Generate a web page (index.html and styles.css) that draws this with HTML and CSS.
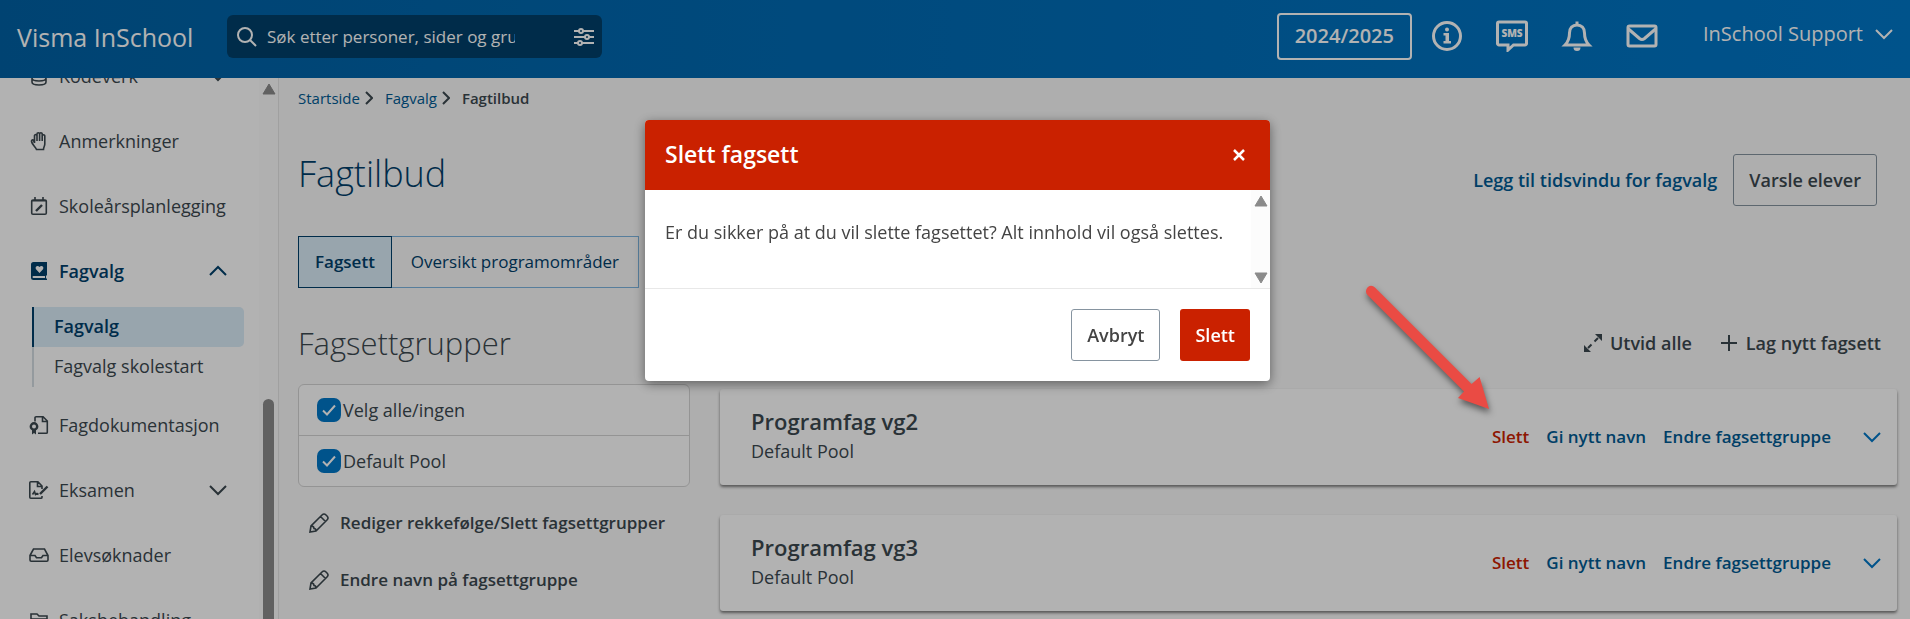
FILE: index.html
```html
<!DOCTYPE html>
<html lang="no">
<head>
<meta charset="utf-8">
<title>Visma InSchool</title>
<link rel="stylesheet" href="styles.css">
</head>
<body>
<header class="topbar">
  <a class="brand" href="#">Visma InSchool</a>
  <div class="search">
    <svg class="search-icon" viewBox="0 0 20 20"><circle cx="8" cy="8" r="7"/><path d="M13 13l6 6"/></svg>
    <input class="search-input" type="text" aria-label="Søk" placeholder="Søk etter personer, sider og grupper">
    <button class="icon-button" aria-label="Filter"><svg class="filter-icon" viewBox="0 0 20 20"><path d="M0 4h5M9 4h11M0 10h11M15 10h5M0 16h4M8 16h12"/><circle cx="7" cy="4" r="2"/><circle cx="13" cy="10" r="2"/><circle cx="6" cy="16" r="2"/></svg></button>
  </div>
  <nav class="tools" aria-label="Verktøy">
    <button class="year">2024/2025</button>
    <button class="icon-button" aria-label="Informasjon"><svg class="tool-icon" viewBox="0 0 32 32"><circle cx="16" cy="16" r="13.500"/><path class="fill" d="M12.500 13h5.500v8h2v2.500h-7.500V21h2v-5.500h-2z"/><circle class="fill" cx="16" cy="9.500" r="2"/></svg></button>
    <button class="icon-button" aria-label="SMS"><svg class="tool-icon" viewBox="0 0 32 32"><path d="M3 2h26a1.500 1.500 0 0 1 1.500 1.500v20a1.500 1.500 0 0 1-1.500 1.500H17.500L12 30v-5H3a1.500 1.500 0 0 1-1.500-1.500v-20A1.500 1.500 0 0 1 3 2z"/><text class="sms" x="16" y="17" text-anchor="middle">SMS</text></svg></button>
    <button class="icon-button" aria-label="Varsler"><svg class="tool-icon" viewBox="0 0 32 32"><path d="M4 25c3-3 4.500-6 4.500-12 0-5 3-8 7.500-8s7.500 3 7.500 8c0 6 1.500 9 4.500 12z"/><path d="M16 1.500V5"/><path class="fill" d="M12.500 27.500h7a3.500 3.500 0 0 1-7 0z"/></svg></button>
    <button class="icon-button" aria-label="Meldinger"><svg class="tool-icon" viewBox="0 0 32 32"><rect x="2" y="6" width="28" height="20" rx="1.500"/><path d="M2.500 9l11 9.500q2.500 2 5 0l11-9.500"/></svg></button>
    <button class="account">InSchool Support<svg class="chevron" viewBox="0 0 18 12"><path d="M1 2l8 8 8-8"/></svg></button>
  </nav>
</header>

<div class="shell">
  <aside class="sidebar">
    <nav class="menu">
      <a class="menu-item" href="#"><svg class="menu-icon" viewBox="0 0 20 20"><ellipse cx="10" cy="4" rx="7" ry="3"/><path d="M3 4v12c0 4 14 4 14 0V4M3 8c0 4 14 4 14 0M3 12c0 4 14 4 14 0"/></svg><span>Kodeverk</span><svg class="chevron" viewBox="0 0 18 12"><path d="M1 2l8 8 8-8"/></svg></a>
      <a class="menu-item" href="#"><svg class="menu-icon" viewBox="0 0 20 20"><path d="M5.500 12V4.500a1.300 1.300 0 0 1 2.500 0V10 3a1.300 1.300 0 0 1 2.600 0v7V3a1.300 1.300 0 0 1 2.600 0v7V5a1.300 1.300 0 0 1 2.600 0v8c0 2-1.300 3-1.300 5.500H7.500C6.500 16 3 13.500 2.500 10.500 2.300 8.800 4 8.500 4.500 9.500L5.500 12"/></svg><span>Anmerkninger</span></a>
      <a class="menu-item" href="#"><svg class="menu-icon" viewBox="0 0 20 20"><rect x="2.700" y="4" width="14.600" height="14.300" rx="1.300"/><path d="M2.700 4.800h14.600M6 1v3M14 1v3"/><path class="thick" d="M7 15l6-6"/></svg><span>Skoleårsplanlegging</span></a>
      <a class="menu-item menu-item-open" href="#"><svg class="menu-icon" viewBox="0 0 20 20"><path class="fill" d="M4.500 1H18v13.500h-1v3h1V19H4.500A2.500 2.500 0 0 1 2 16.500v-13A2.500 2.500 0 0 1 4.500 1z"/><path class="cut" d="M4.500 15H16v2H4.500a1 1 0 0 1 0-2zM10.500 12L7 8.200C5.500 6 8.500 3.500 10.500 6c2-2.500 5 0 3.500 2.200z"/></svg><span>Fagvalg</span><svg class="chevron" viewBox="0 0 18 12"><path d="M1 10l8-8 8 8"/></svg></a>
      <div class="submenu">
        <a class="submenu-item submenu-item-active" href="#">Fagvalg</a>
        <a class="submenu-item" href="#">Fagvalg skolestart</a>
      </div>
      <a class="menu-item" href="#"><svg class="menu-icon" viewBox="0 0 20 20"><path d="M6 6.500V2.800A1.100 1.100 0 0 1 7.100 1.700h7L18.300 6v11.200a1.100 1.100 0 0 1-1.100 1.100H9M13.500 2v4.500H18"/><circle class="thick" cx="5" cy="11.500" r="3.200"/><path class="fill" d="M3 15h4v4.500L5 18l-2 1.500z"/></svg><span>Fagdokumentasjon</span></a>
      <a class="menu-item" href="#"><svg class="menu-icon" viewBox="0 0 20 20"><path d="M13 16v1.200a1.100 1.100 0 0 1-1.100 1.100H1.800A1.100 1.100 0 0 1 .8 17.200V2.800a1.100 1.100 0 0 1 1.100-1.100h7L13 6v3M8.500 2v4.500H13M3.500 14.500l2-3 1 3 1.500-1 1.500 1"/><path class="thick" d="M11 14l7.500-7.500"/></svg><span>Eksamen</span><svg class="chevron" viewBox="0 0 18 12"><path d="M1 2l8 8 8-8"/></svg></a>
      <a class="menu-item" href="#"><svg class="menu-icon" viewBox="0 0 20 20"><path d="M1 10.500L4.500 4h11l3.500 6.500v4.500a1.200 1.200 0 0 1-1.200 1.200H2.200A1.200 1.200 0 0 1 1 15zM1 10.500h5l1.500 2.300h5l1.500-2.300h5"/></svg><span>Elevsøknader</span></a>
      <a class="menu-item" href="#"><svg class="menu-icon" viewBox="0 0 20 20"><path d="M2 17V4h6l2 2h8v11zM2 9h16"/></svg><span>Saksbehandling</span></a>
    </nav>
    <div class="scrollbar"><svg class="scroll-arrow" viewBox="0 0 14 12"><path d="M7 1l6 10H1z"/></svg><div class="scroll-thumb"></div></div>
  </aside>

  <main class="content">
    <nav class="crumbs" aria-label="Brødsmuler">
      <a href="#">Startside</a><svg class="crumb-sep" viewBox="0 0 8 14"><path d="M1 1l6 6-6 6"/></svg>
      <a href="#">Fagvalg</a><svg class="crumb-sep" viewBox="0 0 8 14"><path d="M1 1l6 6-6 6"/></svg>
      <span class="crumb-current">Fagtilbud</span>
    </nav>
    <div class="page-head">
      <h1 class="page-title">Fagtilbud</h1>
      <a class="head-link" href="#">Legg til tidsvindu for fagvalg</a>
      <button class="button button-outline">Varsle elever</button>
    </div>
    <div class="tabs">
      <button class="tab tab-active">Fagsett</button><button class="tab">Oversikt programområder</button>
    </div>
    <div class="columns">
      <section class="groups">
        <h2 class="groups-title">Fagsettgrupper</h2>
        <div class="group-list">
          <label class="group-row"><input class="check" type="checkbox" checked>Velg alle/ingen</label>
          <label class="group-row"><input class="check" type="checkbox" checked>Default Pool</label>
        </div>
        <button class="edit"><svg class="edit-icon" viewBox="0 0 20 20"><path d="M1 19l1-6L13 2q2-2 4 0l1 1q2 2 0 4L7 18zM11.500 3.500l5 5M2 13q3 0 3 2.500 2 0 2 2.500"/></svg>Rediger rekkefølge/Slett fagsettgrupper</button>
        <button class="edit"><svg class="edit-icon" viewBox="0 0 20 20"><path d="M1 19l1-6L13 2q2-2 4 0l1 1q2 2 0 4L7 18zM11.500 3.500l5 5M2 13q3 0 3 2.500 2 0 2 2.500"/></svg>Endre navn på fagsettgruppe</button>
      </section>
      <section class="sets">
        <div class="set-actions">
          <button class="set-action"><svg class="action-icon" viewBox="0 0 18 18"><path d="M4 14l3.500-3.500M10.500 7.500L14 4"/><path class="fill" d="M0 18v-7l7 7zM18 0v7l-7-7z"/></svg>Utvid alle</button>
          <button class="set-action"><svg class="action-icon" viewBox="0 0 18 18"><path d="M9 1v16M1 9h16"/></svg>Lag nytt fagsett</button>
        </div>
        <article class="card">
          <div class="card-text"><h3 class="card-title">Programfag vg2</h3><p class="card-sub">Default Pool</p></div>
          <div class="card-links"><a class="danger" href="#">Slett</a><a href="#">Gi nytt navn</a><a href="#">Endre fagsettgruppe</a></div>
          <button class="icon-button" aria-label="Utvid"><svg class="chevron card-chevron" viewBox="0 0 18 12"><path d="M1 2l8 8 8-8"/></svg></button>
        </article>
        <article class="card">
          <div class="card-text"><h3 class="card-title">Programfag vg3</h3><p class="card-sub">Default Pool</p></div>
          <div class="card-links"><a class="danger" href="#">Slett</a><a href="#">Gi nytt navn</a><a href="#">Endre fagsettgruppe</a></div>
          <button class="icon-button" aria-label="Utvid"><svg class="chevron card-chevron" viewBox="0 0 18 12"><path d="M1 2l8 8 8-8"/></svg></button>
        </article>
      </section>
    </div>
  </main>
</div>

<div class="overlay">
  <div class="modal" role="dialog" aria-modal="true" aria-labelledby="modal-title">
    <div class="modal-head">
      <h2 class="modal-title" id="modal-title">Slett fagsett</h2>
      <button class="icon-button" aria-label="Lukk"><svg class="close-icon" viewBox="0 0 12 12"><path d="M1 1l10 10M11 1L1 11"/></svg></button>
    </div>
    <div class="modal-body">
      <p class="modal-text">Er du sikker på at du vil slette fagsettet? Alt innhold vil også slettes.</p>
      <div class="modal-scroll"><svg class="scroll-arrow" viewBox="0 0 14 12"><path d="M7 1l6 10H1z"/></svg><svg class="scroll-arrow" viewBox="0 0 14 12"><path d="M7 11L1 1h12z"/></svg></div>
    </div>
    <div class="modal-foot">
      <button class="button button-outline">Avbryt</button>
      <button class="button button-danger">Slett</button>
    </div>
  </div>
</div>
<svg class="pointer" viewBox="0 0 140 140"><path d="M16.200 12.800a5.500 5.500 0 0 1 3.500 1.500L116.600 111l8-7L134 136l-31-11 6-6.500L12.500 22a5.500 5.500 0 0 1 3.700-9.200z"/></svg>
</body>
</html>
```
FILE: styles.css
```css
* { box-sizing: border-box; }
body {
  margin: 0;
  height: 100vh;
  display: flex;
  flex-direction: column;
  overflow: hidden;
  background: #f9f9f9;
  color: #3c484f;
  font: 18px/26px "Open Sans", "Noto Sans", sans-serif;
}
a { text-decoration: none; color: #005b94; }
button { font: inherit; color: inherit; background: none; border: 0; padding: 0; cursor: pointer; }
h1, h2, h3, p { margin: 0; }
svg { fill: none; stroke: currentColor; stroke-width: 2; flex: none; display: block; }
.fill { fill: currentColor; stroke: none; }
.icon-button { display: flex; }

.topbar {
  flex: none;
  display: flex;
  align-items: center;
  height: 78px;
  padding: 0 17px;
  background: linear-gradient(90deg, #0061a4, #0077c8);
  color: #fff;
}
.brand { width: 210px; padding-bottom: 4px; color: #fff; font-size: 25px; line-height: 36px; }
.search {
  display: flex;
  align-items: center;
  width: 375px;
  height: 43px;
  margin-bottom: 5px;
  padding: 0 8px 0 10px;
  border-radius: 6px;
  background: #00406b;
}
.search-icon { width: 20px; height: 20px; margin-right: 10px; }
.search-input {
  width: 248px;
  padding: 0;
  border: 0;
  outline: 0;
  background: none;
  color: #fff;
  font: inherit;
  font-size: 17px;
  margin-right: auto;
}
.search-input::placeholder { color: #fff; opacity: 1; }
.filter-icon { width: 20px; height: 20px; }
.tools { display: flex; align-items: center; margin-left: auto; margin-bottom: 6px; }
.year {
  height: 47px;
  padding: 0 16px;
  margin-right: 19px;
  border: 2px solid #fff;
  border-radius: 4px;
  font-size: 20px;
  font-weight: 600;
}
.tool-icon { width: 32px; height: 32px; margin-right: 33px; stroke-width: 3; }
.sms { fill: currentColor; stroke: none; font-size: 10px; font-weight: 800; }
.account { display: flex; align-items: center; gap: 12px; margin-left: 12px; padding-bottom: 4px; font-size: 20px; }
.chevron { width: 18px; height: 12px; }

.shell { flex: 1; min-height: 0; display: flex; }
.sidebar {
  flex: none;
  display: flex;
  width: 279px;
  overflow: hidden;
  background: #fff;
  border-right: 1px solid #e6e6e6;
}
.menu { flex: 1; margin-top: -35px; }
.menu-item { display: flex; align-items: center; height: 65px; padding: 0 32px 0 29px; color: #3c484f; }
.menu-item span { flex: 1; }
.menu-icon { width: 20px; height: 20px; margin-right: 10px; stroke-width: 1.6; }
.menu-icon .thick { stroke-width: 2.4; }
.menu-item-open { color: #00406b; font-weight: 600; }
.cut { fill: #fff; stroke: none; }
.submenu { margin: 4px 15px 5px 32px; }
.submenu-item { display: block; height: 40px; padding-left: 20px; border-left: 2px solid #d5dde3; line-height: 38px; color: #3c484f; }
.submenu-item-active { border-color: #00406b; border-radius: 0 5px 5px 0; background: #daecf8; color: #00406b; font-weight: 600; }
.scrollbar { display: flex; flex-direction: column; align-items: center; width: 19px; padding-top: 5px; background: #fcfcfc; }
.scroll-arrow { width: 14px; height: 12px; fill: #8b8b8b; stroke: #8b8b8b; stroke-width: 1; stroke-linejoin: round; }
.scroll-thumb { flex: 1; width: 11px; margin-top: 304px; border-radius: 6px 6px 0 0; background: #8b8b8b; }

.content { flex: 1; min-width: 0; overflow: hidden; padding: 7px 13px 0 19px; }
.crumbs { display: flex; align-items: center; font-size: 15px; }
.crumb-sep { width: 8px; height: 14px; margin: 0 12px 0 5px; color: #3c484f; }
.crumb-current { font-weight: 600; }
.page-head { display: flex; align-items: center; margin: 43px 20px 0 0; }
.page-title { margin-right: auto; padding-bottom: 12px; font-size: 36px; line-height: 40px; font-weight: 300; color: #00406b; }
.head-link { margin-right: 16px; font-weight: 600; }
.button { height: 52px; padding: 0 15px; border-radius: 3px; font-weight: 600; }
.button-outline { border: 1px solid #8694a0; }
.button-danger { background: #ca2100; color: #fff; }
.tabs { display: flex; margin-top: 30px; }
.tab { height: 52px; padding: 0 19px; border: 1px solid #7db5e0; border-left: 0; color: #00406b; font-size: 17px; }
.tab-active { padding: 0 16px; border: 1px solid #00406b; background: #daecf8; font-weight: 600; }
.columns { display: flex; gap: 30px; margin-top: 36px; }
.groups { width: 392px; }
.groups-title { font-size: 31px; line-height: 38px; font-weight: 300; }
.group-list { margin: 22px 0 7px; border: 1px solid #d5d5d5; border-radius: 6px; background: #fff; }
.group-row { display: flex; align-items: center; height: 50px; padding-left: 18px; }
.group-row + .group-row { height: 51px; border-top: 1px solid #d5d5d5; }
.check {
  appearance: none;
  width: 24px;
  height: 24px;
  margin: 0 2px 0 0;
  border-radius: 7px;
  background: #0077c8 url("data:image/svg+xml,%3Csvg xmlns='http://www.w3.org/2000/svg' viewBox='0 0 24 24'%3E%3Cpath d='M6 12.500l4 4 8-9' fill='none' stroke='white' stroke-width='2'/%3E%3C/svg%3E");
}
.edit { display: flex; align-items: center; gap: 11px; height: 57px; padding-left: 11px; font-size: 17px; font-weight: 600; }
.edit-icon { width: 20px; height: 20px; stroke-width: 1.6; }
.sets { flex: 1; }
.set-actions { display: flex; justify-content: flex-end; gap: 28px; padding: 6px 16px 0 0; font-weight: 600; }
.set-action { display: flex; align-items: center; gap: 8px; }
.action-icon { width: 18px; height: 18px; }
.card {
  display: flex;
  align-items: center;
  height: 96px;
  margin: 33px 0 -3px;
  padding: 0 16px 0 31px;
  border-radius: 3px;
  background: #fff;
  box-shadow: 0 2px 3px rgba(0, 0, 0, .5);
}
.card-text { flex: 1; padding-bottom: 2px; }
.card-title { font-size: 22px; line-height: 30px; font-weight: 600; }
.card-sub { line-height: 30px; }
.card-links { display: flex; gap: 17px; margin-right: 32px; font-size: 17px; font-weight: 600; }
.card-links .danger { color: #ca2100; }
.card-chevron { color: #0077c8; }

.overlay {
  position: fixed;
  inset: 0;
  display: flex;
  align-items: flex-start;
  justify-content: center;
  padding: 120px 0 0 5px;
  background: rgba(0, 0, 0, .3);
}
.modal { width: 625px; border-radius: 4px; overflow: hidden; background: #fff; box-shadow: 0 3px 12px rgba(0, 0, 0, .45); color: #444; }
.modal-head { display: flex; align-items: center; justify-content: space-between; height: 70px; padding: 0 25px 0 20px; background: #ca2100; color: #fff; }
.modal-title { padding-bottom: 2px; font-size: 23px; line-height: 30px; font-weight: 600; }
.close-icon { width: 12px; height: 12px; stroke-width: 2.5; }
.modal-body { display: flex; justify-content: space-between; height: 99px; border-bottom: 1px solid #e8e8e8; }
.modal-text { padding: 29px 0 0 20px; }
.modal-scroll { display: flex; flex-direction: column; align-items: center; justify-content: space-between; width: 19px; padding: 5px 0 4px; background: #fcfcfc; }
.modal-foot { display: flex; justify-content: flex-end; gap: 20px; padding: 20px; }
.pointer { position: absolute; left: 1355px; top: 273px; width: 140px; height: 140px; fill: #ea4b44; stroke: none; filter: drop-shadow(1px 4px 3px rgba(0, 0, 0, .5)); }
```
